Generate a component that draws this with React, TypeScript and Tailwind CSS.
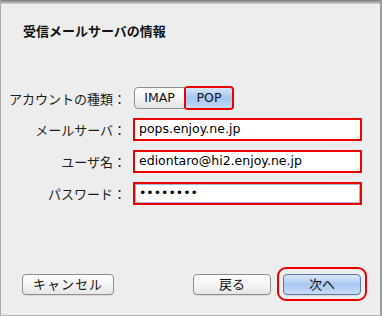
import React from 'react';

const jp = { fontFamily: '"Noto Sans CJK JP", "Noto Sans", sans-serif' };
const latin = { fontFamily: '"DejaVu Sans", "Noto Sans CJK JP", sans-serif' };

const Label: React.FC<{ text: string }> = ({ text }) => (
  <div className="w-[125px] shrink-0 text-right text-[13px] leading-none text-[#1c1c1c]" style={jp}>
    {text}
  </div>
);

const Field: React.FC<{ value: string; focused?: boolean }> = ({ value, focused }) => (
  <div
    className={`ml-[7px] flex h-[23px] w-[229px] items-center border-2 border-[#ec0000] bg-white pl-[4px] text-[12.5px] text-black ${
      focused ? 'shadow-[inset_0_0_0_1px_#9db8dc]' : ''
    }`}
    style={latin}
  >
    {value}
  </div>
);

const MacButton: React.FC<{ label: string; primary?: boolean; className?: string }> = ({ label, primary, className }) => (
  <div
    className={`flex h-[21px] items-center justify-center rounded-[4px] border text-[13px] text-[#111] ${
      primary
        ? 'border-[#5d76a6] bg-gradient-to-b from-[#dbe8fb] via-[#a9c8f1] to-[#c6dcf8]'
        : 'border-[#8e8e8e] bg-gradient-to-b from-white via-[#f4f4f4] to-[#e6e6e6]'
    } shadow-[0_1px_0_rgba(0,0,0,0.08)] ${className ?? ''}`}
    style={jp}
  >
    {label}
  </div>
);

export default function App() {
  return (
    <div className="flex h-[316px] w-[382px] flex-col border-b border-l border-r-2 border-b-[#b4b4b4] border-l-[#a8a8a8] border-r-[#9c9c9c] bg-[#ededed]">
      {/* top shadow edge */}
      <div className="h-[4px] bg-gradient-to-b from-[#7a7a7a] via-[#a4a4a4] to-[#d6d6d6]" />

      <div className="pl-[22px] pt-[19px] text-[13px] font-bold leading-[16px] text-[#111]" style={jp}>
        受信メールサーバの情報
      </div>

      {/* account type */}
      <div className="mt-[48px] flex items-center pl-[0px]">
        <Label text="アカウントの種類：" />
        <div className="ml-[8px] flex h-[22px]">
          <div
            className="flex w-[51px] items-center justify-center rounded-l-[4px] border border-[#8e8e8e] bg-gradient-to-b from-white via-[#f5f5f5] to-[#e4e4e4] text-[12.5px] text-[#111]"
            style={latin}
          >
            IMAP
          </div>
          <div className="-my-[1px] -ml-[1px] flex w-[50px] rounded-[4px] border-2 border-[#ec0000]">
            <div
              className="flex flex-1 items-center justify-center rounded-r-[3px] bg-gradient-to-b from-[#d5e5fa] via-[#a6c5ef] to-[#c4daf7] text-[12.5px] text-[#111]"
              style={latin}
            >
              POP
            </div>
          </div>
        </div>
      </div>

      {/* fields */}
      <div className="mt-[9px] flex flex-col gap-[9px]">
        <div className="flex items-center">
          <Label text="メールサーバ：" />
          <Field value="pops.enjoy.ne.jp" />
        </div>
        <div className="flex items-center">
          <Label text="ユーザ名：" />
          <Field value="ediontaro@hi2.enjoy.ne.jp" />
        </div>
        <div className="flex items-center">
          <Label text="パスワード：" />
          <Field value="••••••••" focused />
        </div>
      </div>

      {/* buttons */}
      <div className="mt-auto flex items-center pb-[14px] pl-[21px] pr-[13px]">
        <MacButton label="キャンセル" className="w-[92px] tracking-[1px]" />
        <div className="flex-1" />
        <MacButton label="戻る" className="w-[78px]" />
        <div className="ml-[6px] flex h-[34px] w-[90px] items-center justify-center rounded-[9px] border-2 border-[#ec0000]">
          <MacButton label="次へ" primary className="w-[78px]" />
        </div>
      </div>
    </div>
  );
}
